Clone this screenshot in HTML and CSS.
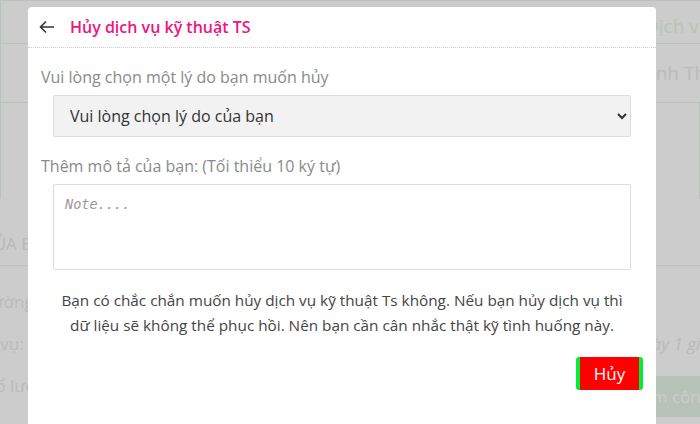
FILE: index.html
```html
<!DOCTYPE html>
<html lang="vi">
<head>
    <meta charset="UTF-8">
    <meta name="viewport" content="width=device-width, initial-scale=1.0">
    <title>Hủy dịch vụ kỹ thuật TS</title>
    <link rel="stylesheet" href="styles.css">
</head>
<body>

<div class="page">
    <div class="info-box">
        <div class="info-row top">
            <span class="right first">Dịch vụ</span>
        </div>
        <div class="info-row">
            <span class="right second">Thanh Thạch</span>
        </div>
        <div class="info-empty"></div>
    </div>
    <div class="section-title">CỦA BẠN</div>
    <div class="list">
        <div class="list-row">
            <span class="l1">Đường</span>
        </div>
        <div class="list-row">
            <span class="l2">Gói vụ:</span>
            <span class="italic">ngày 1 giờ</span>
        </div>
        <div class="list-row">
            <span class="l3">Số lượng</span>
            <span class="green-btn">Thêm công</span>
        </div>
    </div>
</div>

<div class="overlay"></div>

<div class="modal">
    <div class="modal-header">
        <svg class="back" width="16" height="14" viewBox="0 0 16 14">
            <path d="M15 7H2M7 1.5L1.5 7L7 12.5" fill="none" stroke="#333" stroke-width="1.6"/>
        </svg>
        <h1>Hủy dịch vụ kỹ thuật TS</h1>
    </div>
    <div class="modal-body">
        <label for="reason">Vui lòng chọn một lý do bạn muốn hủy</label>
        <select id="reason">
            <option>Vui lòng chọn lý do của bạn</option>
        </select>

        <label for="note">Thêm mô tả của bạn: (Tối thiểu 10 ký tự)</label>
        <textarea id="note" placeholder="Note...."></textarea>

        <p class="warning">Bạn có chắc chắn muốn hủy dịch vụ kỹ thuật Ts không. Nếu bạn hủy dịch vụ thì<br>dữ liệu sẽ không thể phục hồi. Nên bạn cần cân nhắc thật kỹ tình huống này.</p>
    </div>
    <div class="modal-footer">
        <button class="btn-cancel">Hủy</button>
    </div>
</div>

</body>
</html>
```

FILE: styles.css
```css
body {
    margin: 0;
    font-family: "Open Sans", Arial, sans-serif;
    background: #fff;
    height: 424px;
    overflow: hidden;
}
.page {
    font-size: 17px;
    white-space: nowrap;
}
.info-box {
    border-left: 1px solid #e6f6e6;
    border-top: 1px solid #e6f6e6;
}
.info-row {
    display: flex;
    height: 42px;
    align-items: center;
    border-bottom: 1px solid #e6f6e6;
}
.info-row:nth-child(2) {
    height: 58px;
}
.right {
    color: #e6f6e6;
    font-size: 19px;
}
.right.first {
    margin-left: 644px;
    margin-top: 8px;
}
.right.second {
    margin-left: 622px;
    color: #eaeaea;
}
.info-empty {
    height: 96px;
    border-right: 1px solid #e6f6e6;
}
.section-title {
    margin-left: -17px;
    padding: 33px 0 10px 0;
    color: #e8e8e8;
    border-bottom: 1px solid #f2f2f2;
}
.list {
    padding-top: 14px;
}
.list-row {
    height: 42px;
    display: flex;
    align-items: center;
    justify-content: space-between;
    color: #eaeaea;
}
.l1 {
    margin-left: -20px;
}
.l2 {
    margin-left: -31px;
}
.l3 {
    margin-left: -14px;
}
.italic {
    font-style: italic;
    margin-right: -10px;
}
.green-btn {
    background: #e4f4e4;
    color: #fff;
    padding: 9px 12px;
    margin-top: 22px;
    margin-right: -22px;
}
.overlay {
    position: fixed;
    inset: 0;
    background: rgba(0, 0, 0, 0.2);
}
.modal {
    position: fixed;
    left: 28px;
    top: 7px;
    width: 628px;
    height: 440px;
    background: #fff;
    border-radius: 4px;
}
.modal-header {
    display: flex;
    align-items: center;
    height: 40px;
    padding: 0 0 0 11px;
    border-bottom: 1px dotted #ccc;
}
.modal-header h1 {
    margin: 0 0 0 15px;
    font-size: 16px;
    font-weight: 600;
    color: #f0147d;
}
.modal-body {
    padding: 18px 25px 0 13px;
}
label {
    display: block;
    font-size: 16px;
    color: #8a8a8a;
    margin-bottom: 7px;
}
select {
    display: block;
    width: 578px;
    height: 42px;
    margin: 0 0 18px 12px;
    padding: 0 12px;
    font-family: "Open Sans", Arial, sans-serif;
    font-size: 16px;
    color: #333;
    background: #f2f2f2;
    border: 1px solid #dcdcdc;
    border-radius: 2px;
}
textarea {
    display: block;
    width: 578px;
    height: 86px;
    margin: 0 0 0 12px;
    padding: 11px 11px;
    box-sizing: border-box;
    font-family: "DejaVu Sans Mono", monospace;
    font-size: 13.5px;
    border: 1px solid #dcdcdc;
    border-radius: 2px;
    resize: none;
}
textarea::placeholder {
    color: #999;
    font-style: italic;
}
.warning {
    margin: 18px 0 0 12px;
    text-align: center;
    font-size: 15.3px;
    line-height: 25px;
    color: #444;
}
.modal-footer {
    display: flex;
    justify-content: flex-end;
    padding: 19px 13px 0 0;
}
.btn-cancel {
    width: 67px;
    height: 33px;
    background: #ff0000;
    color: #fff;
    border: none;
    border-left: 4px solid #00ee33;
    border-right: 4px solid #00ee33;
    border-radius: 3px;
    font-family: "Open Sans", Arial, sans-serif;
    font-size: 17px;
}
```
